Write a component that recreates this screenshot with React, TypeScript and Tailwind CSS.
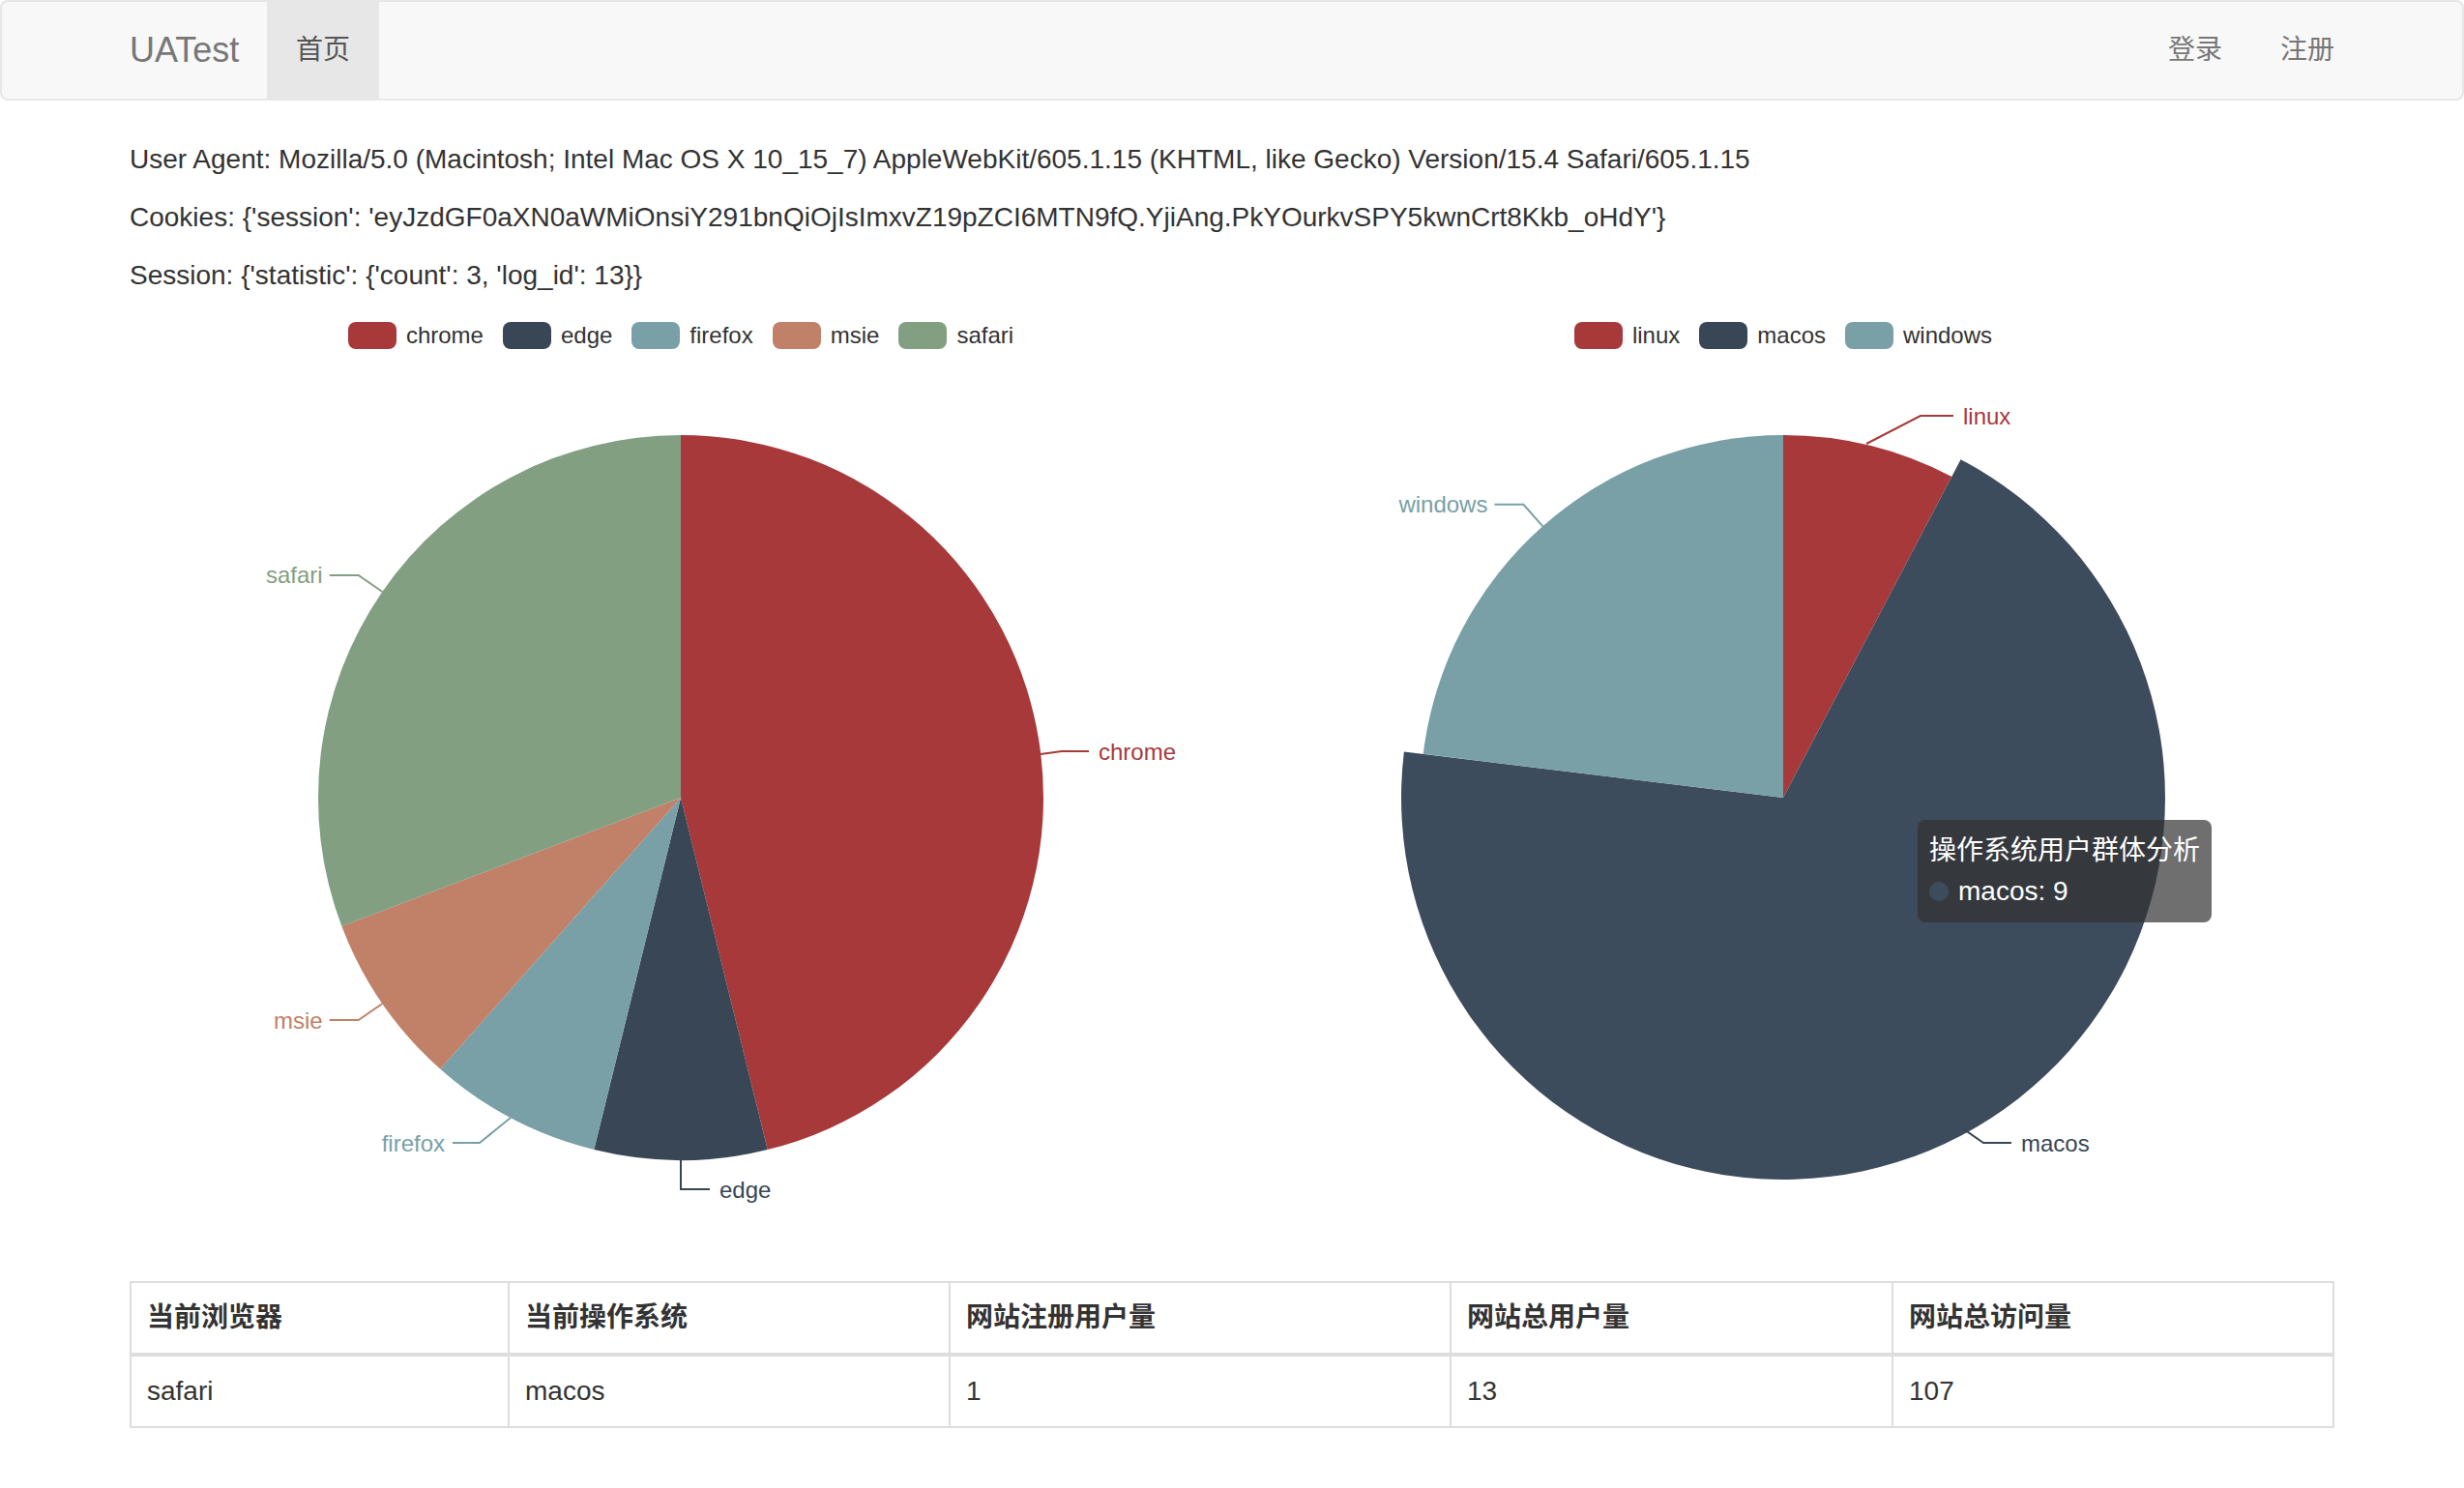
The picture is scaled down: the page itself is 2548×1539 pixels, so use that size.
import React from "react";

const SANS = "Liberation Sans, Noto Sans CJK SC, sans-serif";

const COLORS = {
  red: "#a8393a",
  dark: "#384655",
  darkHover: "#3d4c5d",
  teal: "#78a0a6",
  salmon: "#c08168",
  green: "#839f82",
};

type Slice = { name: string; value: number; color: string };

const browsers: Slice[] = [
  { name: "chrome", value: 6, color: COLORS.red },
  { name: "edge", value: 1, color: COLORS.dark },
  { name: "firefox", value: 1, color: COLORS.teal },
  { name: "msie", value: 1, color: COLORS.salmon },
  { name: "safari", value: 4, color: COLORS.green },
];

const systems: Slice[] = [
  { name: "linux", value: 1, color: COLORS.red },
  { name: "macos", value: 9, color: COLORS.dark },
  { name: "windows", value: 3, color: COLORS.teal },
];

// chart box is 1140 x 1000, pie centre at (570, 500)
const CX = 570;
const CY = 500;
const R = 375;

function pt(r: number, a: number): [number, number] {
  const rad = (a * Math.PI) / 180;
  return [CX + r * Math.sin(rad), CY - r * Math.cos(rad)];
}

function sector(r: number, a0: number, a1: number) {
  const [x0, y0] = pt(r, a0);
  const [x1, y1] = pt(r, a1);
  const large = a1 - a0 > 180 ? 1 : 0;
  return `M${CX},${CY}L${x0},${y0}A${r},${r} 0 ${large} 1 ${x1},${y1}Z`;
}

type Label = { pts: [number, number][]; tx: number; ty: number; anchor: "start" | "end" };

function autoLabel(mid: number): Label {
  const p0 = pt(R, mid);
  const p1 = pt(R + 30, mid);
  const right = Math.sin((mid * Math.PI) / 180) >= 0;
  const p2: [number, number] = [p1[0] + (right ? 30 : -30), p1[1]];
  return {
    pts: [p0, p1, p2],
    tx: p2[0] + (right ? 10 : -7),
    ty: p2[1],
    anchor: right ? "start" : "end",
  };
}

function Legend({ items }: { items: Slice[] }) {
  return (
    <div className="flex h-[44px] items-center justify-center gap-[20px]">
      {items.map((s) => (
        <div key={s.name} className="flex items-center gap-[10px]">
          <span className="h-[28px] w-[50px] rounded-[8px]" style={{ background: s.color }} />
          <span className="text-[24px] leading-[28px] text-[#333]">{s.name}</span>
        </div>
      ))}
    </div>
  );
}

function PieChart({
  data,
  hover,
  fixedLabels,
}: {
  data: Slice[];
  hover?: string;
  fixedLabels?: Record<string, Label>;
}) {
  const total = data.reduce((a, b) => a + b.value, 0);
  let acc = 0;
  const slices = data.map((s) => {
    const a0 = (acc / total) * 360;
    acc += s.value;
    const a1 = (acc / total) * 360;
    return { ...s, a0, a1, mid: (a0 + a1) / 2 };
  });

  return (
    <svg width={1140} height={956} viewBox="0 44 1140 956">
      {slices.map((s) => {
        const on = s.name === hover;
        return (
          <path
            key={s.name}
            d={sector(on ? 395 : R, s.a0, s.a1)}
            fill={on ? COLORS.darkHover : s.color}
          />
        );
      })}
      {slices.map((s) => {
        const l = fixedLabels?.[s.name] ?? autoLabel(s.mid);
        return (
          <g key={s.name}>
            <polyline
              points={l.pts.map((p) => p.join(",")).join(" ")}
              fill="none"
              stroke={s.color}
              strokeWidth={2}
            />
            <text
              x={l.tx}
              y={l.ty}
              fill={s.color}
              fontSize={24}
              fontFamily={SANS}
              textAnchor={l.anchor}
              dominantBaseline="central"
            >
              {s.name}
            </text>
          </g>
        );
      })}
    </svg>
  );
}

const browserLabels: Record<string, Label> = {
  chrome: { pts: [[942, 455], [964, 452], [992, 452]], tx: 1002, ty: 452, anchor: "start" },
  firefox: { pts: [[394, 831], [362, 857], [334, 857]], tx: 326, ty: 857, anchor: "end" },
};

const osLabels: Record<string, Label> = {
  linux: { pts: [[656, 134], [712, 105], [746, 105]], tx: 756, ty: 105, anchor: "start" },
  macos: { pts: [[757, 843], [777, 857], [806, 857]], tx: 816, ty: 857, anchor: "start" },
};

export default function App() {
  return (
    <div className="min-h-screen bg-white font-['Liberation_Sans','Noto_Sans_CJK_SC',sans-serif] text-[28px] leading-[40px] text-[#333]">
      {/* Navbar */}
      <nav className="mb-[41px] h-[104px] rounded-[8px] border-2 border-[#e7e7e7] bg-[#f8f8f8]">
        <div className="mx-auto flex h-full w-[2340px] px-[30px]">
          <a className="-ml-[30px] flex w-[172px] items-center px-[30px] text-[36px] text-[#777]">UATest</a>
          <a className="flex items-center bg-[#e7e7e7] px-[30px] text-[#555]">首页</a>
          <div className="-mr-[30px] ml-auto flex">
            <a className="flex items-center px-[30px] text-[#777]">登录</a>
            <a className="flex items-center px-[30px] text-[#777]">注册</a>
          </div>
        </div>
      </nav>

      <div className="mx-auto w-[2340px] px-[30px]">
        <p className="mb-[20px]">
          User Agent: Mozilla/5.0 (Macintosh; Intel Mac OS X 10_15_7) AppleWebKit/605.1.15 (KHTML, like Gecko) Version/15.4 Safari/605.1.15
        </p>
        <p className="mb-[20px]">
          Cookies: {"{'session': 'eyJzdGF0aXN0aWMiOnsiY291bnQiOjIsImxvZ19pZCI6MTN9fQ.YjiAng.PkYOurkvSPY5kwnCrt8Kkb_oHdY'}"}
        </p>
        <p className="mb-[20px]">Session: {"{'statistic': {'count': 3, 'log_id': 13}}"}</p>

        {/* Charts */}
        <div className="flex">
          <div className="flex h-[1000px] w-[1140px] flex-col">
            <Legend items={browsers} />
            <PieChart data={browsers} fixedLabels={browserLabels} />
          </div>
          <div className="relative flex h-[1000px] w-[1140px] flex-col">
            <Legend items={systems} />
            <PieChart data={systems} hover="macos" fixedLabels={osLabels} />
            <div className="absolute left-[709px] top-[523px] rounded-[8px] bg-[rgba(50,50,50,0.7)] px-[12px] py-[11px] text-[28px] leading-[42px] whitespace-nowrap text-white">
              <div>操作系统用户群体分析</div>
              <div className="flex items-center">
                <span className="mr-[10px] h-[20px] w-[20px] rounded-full bg-[#3d4c5d]" />
                macos: 9
              </div>
            </div>
          </div>
        </div>

        {/* Stats table */}
        <table className="w-full table-fixed border-collapse border-2 border-[#ddd]">
          <thead>
            <tr>
              {[
                ["当前浏览器", "w-[391px]"],
                ["当前操作系统", "w-[456px]"],
                ["网站注册用户量", "w-[518px]"],
                ["网站总用户量", "w-[457px]"],
                ["网站总访问量", ""],
              ].map(([t, w]) => (
                <th key={t} className={`${w} border-2 border-b-4 border-[#ddd] p-[16px] text-left font-bold`}>
                  {t}
                </th>
              ))}
            </tr>
          </thead>
          <tbody>
            <tr>
              {["safari", "macos", "1", "13", "107"].map((t, i) => (
                <td key={i} className="border-2 border-[#ddd] p-[16px]">
                  {t}
                </td>
              ))}
            </tr>
          </tbody>
        </table>
      </div>
    </div>
  );
}
